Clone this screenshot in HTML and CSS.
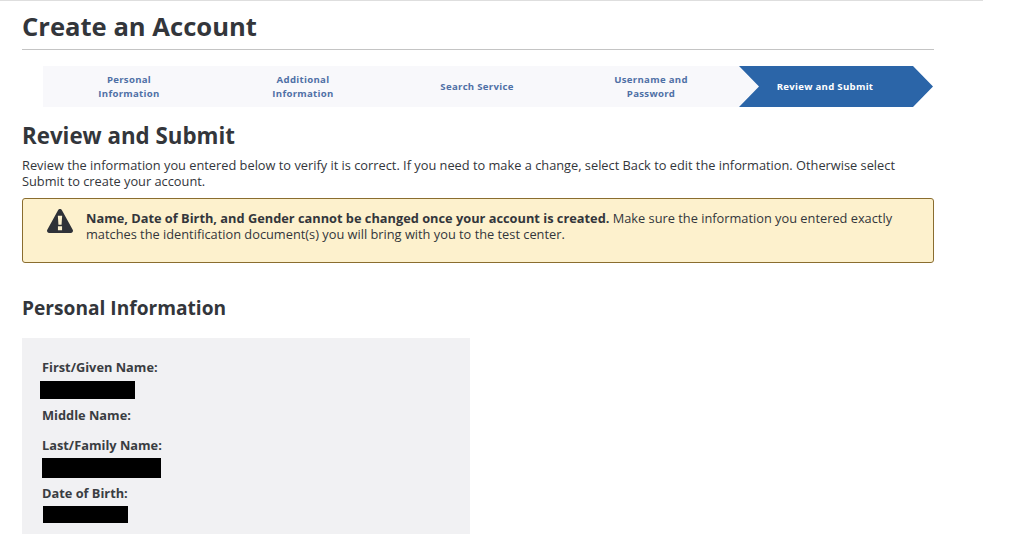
FILE: index.html
```html
<!DOCTYPE html>
<html lang="en">
<head>
<meta charset="utf-8">
<title>Create an Account</title>
<link rel="stylesheet" href="styles.css">
</head>
<body>
<main class="page">
  <h1 class="title">Create an Account</h1>
  <ol class="steps">
    <li class="step">Personal<br>Information</li>
    <li class="step">Additional<br>Information</li>
    <li class="step">Search Service</li>
    <li class="step">Username and<br>Password</li>
    <li class="step step-active">Review and Submit</li>
  </ol>
  <h2 class="subtitle">Review and Submit</h2>
  <p class="intro">Review the information you entered below to verify it is correct. If you need to make a change, select Back to edit the information. Otherwise select Submit to create your account.</p>
  <div class="alert">
    <svg class="alert-icon" viewBox="0.7 1 26.6 23" width="26" height="24" preserveAspectRatio="none" aria-hidden="true">
      <path fill="#2f3238" d="M14 1c.9 0 1.6.5 2 1.2l11 18.6c.8 1.4-.1 3.2-1.9 3.2H2.900C1.100 24 .2 22.200 1 20.800L12 2.200C12.400 1.500 13.100 1 14 1z"/>
      <path fill="#fdf1cd" d="M11.800 7.500h4.400l-.6 8.500h-3.200zM11.900 17.500h4.200v3.800h-4.200z"/>
    </svg>
    <p class="alert-text"><strong>Name, Date of Birth, and Gender cannot be changed once your account is created.</strong> Make sure the information you entered exactly matches the identification document(s) you will bring with you to the test center.</p>
  </div>
  <h2 class="section-title">Personal Information</h2>
  <section class="card">
    <div class="label">First/Given Name:</div>
    <div class="redact redact-first"></div>
    <div class="label label-middle">Middle Name:</div>
    <div class="label label-last">Last/Family Name:</div>
    <div class="redact redact-last"></div>
    <div class="label label-dob">Date of Birth:</div>
    <div class="redact redact-dob"></div>
  </section>
</main>
</body>
</html>
```
FILE: styles.css
```css
html, body {
  margin: 0;
  padding: 0;
  background: #fff;
  overflow: hidden;
}
body {
  height: 534px;
  font-family: "Open Sans", "Noto Sans", sans-serif;
  color: #33363b;
}
.page {
  width: 961px;
  height: 533px;
  padding-left: 22px;
  border-top: 1px solid #dedede;
  overflow: hidden;
}
.title {
  width: 912px;
  height: 49px;
  margin: 0;
  box-sizing: border-box;
  border-bottom: 1px solid #c4c4c4;
  font-size: 25.6px;
  font-weight: 700;
  line-height: 52px;
  color: #33363b;
}
.steps {
  display: flex;
  width: 868px;
  height: 41px;
  margin: 16px 0 0 21px;
  padding: 0 2px 0 0;
  list-style: none;
  background: #f8f8fb;
}
.step {
  display: flex;
  align-items: center;
  justify-content: center;
  flex: 0 0 174px;
  box-sizing: border-box;
  text-align: center;
  font-size: 9.6px;
  font-weight: 700;
  line-height: 14px;
  letter-spacing: 0.3px;
  color: #4f70a6;
}
.step:not(.step-active) {
  padding-right: 2px;
}
.step-active {
  flex: 0 0 194px;
  padding-right: 22px;
  color: #fff;
  background: #2b65a8;
  clip-path: polygon(0 0, 174px 0, 194px 50%, 174px 100%, 0 100%, 20px 50%);
}
.subtitle {
  margin: 14px 0 0;
  font-size: 22.3px;
  font-weight: 700;
  line-height: 30px;
  color: #33363b;
}
.intro {
  width: 912px;
  margin: 6px 0 0;
  font-size: 12.8px;
  line-height: 16px;
  color: #33363b;
}
.alert {
  display: flex;
  box-sizing: border-box;
  width: 912px;
  height: 65px;
  margin-top: 9px;
  padding: 11px 20px 0 24px;
  background: #fdf1cd;
  border: 1px solid #8a6d2f;
  border-radius: 3px;
}
.alert-icon {
  flex: none;
  margin: -1px 13px 0 0;
}
.alert-text {
  margin: 0;
  font-size: 12.8px;
  line-height: 16px;
  color: #33363b;
}
.section-title {
  margin: 30px 0 0;
  font-size: 19.15px;
  font-weight: 700;
  line-height: 30px;
  color: #33363b;
}
.card {
  box-sizing: border-box;
  width: 448px;
  height: 196px;
  margin-top: 15px;
  padding: 21px 20px 0;
  background: #f1f1f3;
}
.label {
  font-size: 12.8px;
  font-weight: 700;
  line-height: 16px;
  color: #3a3d42;
}
.label-middle { margin-top: 8px; }
.label-last { margin-top: 14px; }
.label-dob { margin-top: 7px; }
.redact { background: #000; }
.redact-first {
  width: 95px;
  height: 18px;
  margin: 6px 0 0 -2px;
}
.redact-last {
  width: 119px;
  height: 20px;
  margin-top: 5px;
}
.redact-dob {
  width: 85px;
  height: 17px;
  margin: 5px 0 0 1px;
}
```
